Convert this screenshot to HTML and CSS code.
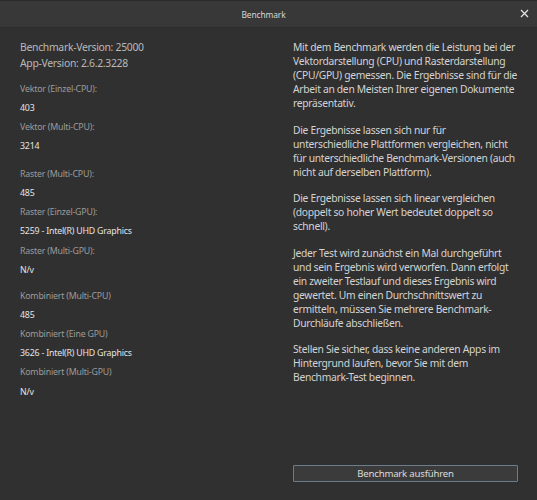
FILE: index.html
```html
<!DOCTYPE html>
<html lang="de">
<head>
<meta charset="utf-8">
<title>Benchmark</title>
<link rel="stylesheet" href="styles.css">
</head>
<body>
<div class="window">
  <div class="titlebar">
    <span class="title">Benchmark</span>
    <span class="close" aria-label="Schließen">
      <svg width="9" height="9" viewBox="0 0 9 9"><path d="M1 1 L8 8 M8 1 L1 8" stroke="#e2e2e2" stroke-width="1.3" fill="none"/></svg>
    </span>
  </div>
  <div class="content">
    <div class="left">
      <div class="versions">
        <div>Benchmark-Version: 25000</div>
        <div>App-Version: 2.6.2.3228</div>
      </div>
      <div class="group g1">
        <div class="label">Vektor (Einzel-CPU):</div>
        <div class="value">403</div>
        <div class="label">Vektor (Multi-CPU):</div>
        <div class="value">3214</div>
      </div>
      <div class="group g2">
        <div class="label">Raster (Multi-CPU):</div>
        <div class="value">485</div>
        <div class="label">Raster (Einzel-GPU):</div>
        <div class="value">5259 - Intel(R) UHD Graphics</div>
        <div class="label">Raster (Multi-GPU):</div>
        <div class="value">N/v</div>
      </div>
      <div class="group g3">
        <div class="label">Kombiniert (Multi-CPU)</div>
        <div class="value">485</div>
        <div class="label">Kombiniert (Eine GPU)</div>
        <div class="value">3626 - Intel(R) UHD Graphics</div>
        <div class="label">Kombiniert (Multi-GPU)</div>
        <div class="value">N/v</div>
      </div>
    </div>
    <div class="right">
      <p>Mit dem Benchmark werden die Leistung bei der<br>Vektordarstellung (CPU) und Rasterdarstellung<br>(CPU/GPU) gemessen. Die Ergebnisse sind für die<br>Arbeit an den Meisten Ihrer eigenen Dokumente<br>repräsentativ.</p>
      <p>Die Ergebnisse lassen sich nur für<br>unterschiedliche Plattformen vergleichen, nicht<br>für unterschiedliche Benchmark-Versionen (auch<br>nicht auf derselben Plattform).</p>
      <p>Die Ergebnisse lassen sich linear vergleichen<br>(doppelt so hoher Wert bedeutet doppelt so<br>schnell).</p>
      <p>Jeder Test wird zunächst ein Mal durchgeführt<br>und sein Ergebnis wird verworfen. Dann erfolgt<br>ein zweiter Testlauf und dieses Ergebnis wird<br>gewertet. Um einen Durchschnittswert zu<br>ermitteln, müssen Sie mehrere Benchmark-<br>Durchläufe abschließen.</p>
      <p>Stellen Sie sicher, dass keine anderen Apps im<br>Hintergrund laufen, bevor Sie mit dem<br>Benchmark-Test beginnen.</p>
      <button class="run" type="button">Benchmark ausführen</button>
    </div>
  </div>
</div>
</body>
</html>
```
FILE: styles.css
```css
html, body {
  margin: 0;
  padding: 0;
  background: #303030;
}
body {
  font-family: "Noto Sans", "Open Sans", sans-serif;
  width: 537px;
  height: 500px;
  overflow: hidden;
}
.window {
  display: flex;
  flex-direction: column;
  height: 500px;
}
.titlebar {
  height: 28px;
  background: #383838;
  border-top: 1px solid #2a2a2a;
  border-bottom: 1px solid #2b2b2b;
  box-sizing: border-box;
  display: flex;
  align-items: center;
  justify-content: center;
  padding-right: 10px;
  position: relative;
  flex: none;
}
.title {
  font-size: 8.4px;
  letter-spacing: -0.1px;
  color: #d6d6d6;
}
.close {
  position: absolute;
  right: 8px;
  top: 8px;
  width: 9px;
  height: 9px;
  display: flex;
}
.content {
  flex: 1;
  display: flex;
  padding: 11px 19px 18px 20px;
  min-width: 0;
}
.left {
  width: 273px;
  flex: none;
}
.versions {
  font-size: 10.4px;
  letter-spacing: -0.3px;
  line-height: 16px;
  color: #b9b9b9;
}
.group {
  font-size: 8.8px;
  letter-spacing: -0.2px;
  line-height: 19.2px;
}
.g1 {
  margin-top: 8.5px;
}
.g2 {
  margin-top: 8.5px;
}
.g3 {
  margin-top: 6.5px;
}
.label {
  color: #9c9c9c;
}
.value {
  color: #e4e4e4;
}
.right {
  flex: 1;
  min-width: 0;
  display: flex;
  flex-direction: column;
  padding-top: 1px;
}
.right p {
  margin: 0 0 12.5px;
  font-size: 10.3px;
  letter-spacing: -0.3px;
  line-height: 14px;
  color: #d3d3d3;
  white-space: nowrap;
}
.run {
  margin-top: auto;
  height: 17px;
  padding: 0;
  background: #3b3b3b;
  border: 1px solid #6d7c8c;
  border-radius: 1px;
  color: #dcdcdc;
  font-family: "Noto Sans", "Open Sans", sans-serif;
  font-size: 9.6px;
  letter-spacing: -0.2px;
  line-height: 15px;
}
```
